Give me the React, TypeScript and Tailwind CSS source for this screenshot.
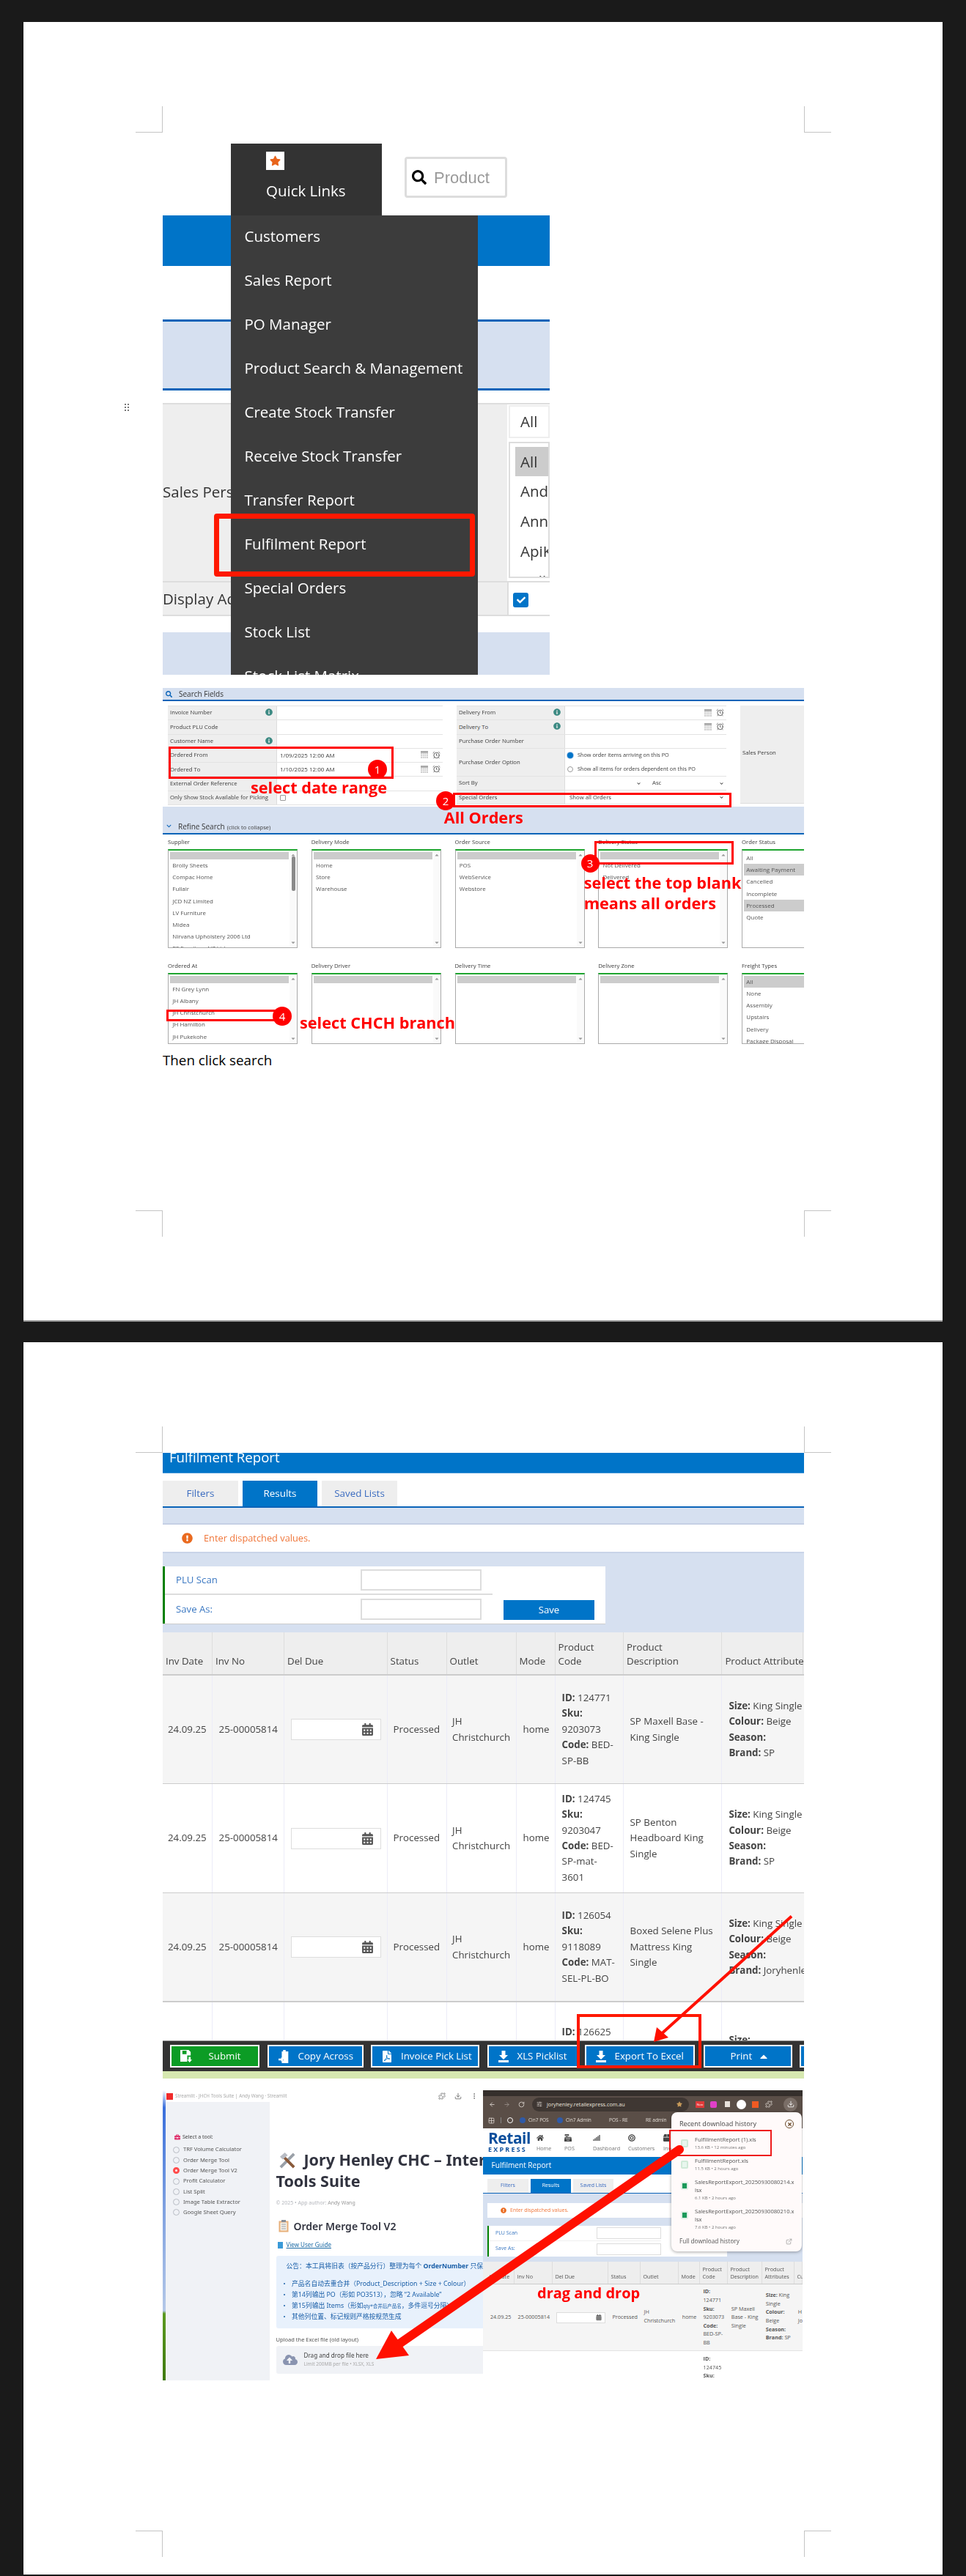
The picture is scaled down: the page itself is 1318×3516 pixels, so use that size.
import type { ReactNode } from 'react';
import { AlarmClock, ExternalLink, Puzzle, RotateCw, ArrowLeft, ArrowRight, Grid2x2, MoreVertical, Download, SlidersHorizontal } from 'lucide-react';
import { FaStar, FaSearch, FaInfoCircle, FaCalendarAlt, FaFilePdf, FaHome, FaCaretUp, FaChevronDown, FaCheck, FaCashRegister, FaSignal, FaBullseye, FaBox, FaExclamationCircle, FaCloudUploadAlt, FaBriefcase, FaTimes } from 'react-icons/fa';

const menuItems = ['Customers', 'Sales Report', 'PO Manager', 'Product Search & Management', 'Create Stock Transfer', 'Receive Stock Transfer', 'Transfer Report', 'Fulfilment Report', 'Special Orders', 'Stock List', 'Stock List Matrix'];

function CropMark({ className }: { className: string }) {
  return <div className={`absolute w-[37px] h-[36px] border-[#c4c4c4] ${className}`} />;
}

function Badge({ n, className }: { n: number; className: string }) {
  return <div className={`absolute flex items-center justify-center rounded-full bg-[#ff0000] text-white text-[15px] ${className}`}>{n}</div>;
}

function Callout({ children, className }: { children: ReactNode; className: string }) {
  return <div className={`absolute whitespace-nowrap font-bold text-[#ff0000] leading-none ${className}`}>{children}</div>;
}

function QuickLinksShot() {
  return (
    <div className="relative w-[528px] h-[725px] overflow-hidden blur-[0.5px]">
      <div className="flex h-[98px]">
        <div className="ml-[93px] w-[206px] bg-[#333333] flex flex-col">
          <div className="ml-[48px] mt-[11px] w-[25px] h-[25px] bg-white flex items-center justify-center">
            <FaStar className="text-[#e8641b] text-[15px]" />
          </div>
          <div className="mt-[15px] ml-[48px] text-[20.5px] leading-[27px] text-white">Quick Links</div>
        </div>
        <div className="ml-[31px] mt-[18px] w-[140px] h-[56px] border-[3px] border-[#dddddd] rounded-[4px] flex items-center pl-[7px]">
          <FaSearch className="text-[20px] text-black" />
          <span className="ml-[10px] text-[22px] text-[#9a9a9a] [font-family:'Liberation_Sans',sans-serif]">Product</span>
        </div>
      </div>
      <div className="h-[69px] bg-[#0074c8]" />
      <div className="h-[73px]" />
      <div className="h-[97px] bg-[#d6e0f0] border-y-[3px] border-[#0a63b8]" />
      <div className="h-[17px]" />
      <div className="flex h-[243px] border-t-2 border-[#dddddd] bg-[#eeeeee]">
        <div className="w-[470px] flex items-center pb-[2px] text-[20.5px] text-[#333333] whitespace-nowrap overflow-hidden">Sales Person</div>
        <div className="flex-1 bg-white pl-[2px] pt-[1px] overflow-hidden">
          <div className="h-[45px] border-2 border-[#eeeeee] flex items-center pl-[14px] text-[20.5px] text-[#333333]">All</div>
          <div className="mt-[5px] h-[186px] border-2 border-[#dddddd] pl-[7px] pt-[5px] text-[20.5px] leading-[41px] text-[#333333] overflow-hidden">
            <div className="h-[40px] bg-[#cccccc] pl-[7px]">All</div>
            <div className="pl-[7px] whitespace-nowrap">Andy</div>
            <div className="pl-[7px] whitespace-nowrap">Annie</div>
            <div className="pl-[7px] whitespace-nowrap">ApiKey</div>
            <div className="pl-[7px] whitespace-nowrap">Belle</div>
          </div>
        </div>
      </div>
      <div className="flex h-[48px] border-y-2 border-[#dddddd] bg-[#eeeeee]">
        <div className="w-[470px] flex items-center text-[20.5px] text-[#333333] whitespace-nowrap overflow-hidden">Display Address</div>
        <div className="flex-1 bg-white border-l-2 border-[#dddddd] pl-[6px] pt-[14px]">
          <div className="w-[21px] h-[20px] rounded-[3px] bg-[#0074c8] flex items-center justify-center">
            <FaCheck className="text-white text-[12px]" />
          </div>
        </div>
      </div>
      <div className="h-[22px]" />
      <div className="h-[58px] bg-[#d6e0f0]" />

      <div className="absolute left-[93px] top-[98px] w-[337px] h-[627px] bg-[#3c3c3c] pl-[18.5px] overflow-hidden">
        {menuItems.map((item) => (
          <div key={item} className="h-[60px] pt-[1px] flex items-center text-[20.5px] text-white whitespace-nowrap first:-mt-[2px]">{item}</div>
        ))}
      </div>
      <div className="absolute left-[70px] top-[505px] w-[356px] h-[86px] border-[7px] border-[#ff1800] rounded-[4px]" />
    </div>
  );
}

function FieldRow({ label, children, info, h = 'h-[19.3px]', cell = 'w-[149px]' }: { label: string; children?: ReactNode; info?: boolean; h?: string; cell?: string }) {
  return (
    <div className={`flex border-b border-[#e3e3e3] ${h}`}>
      <div className={`${cell} shrink-0 bg-[#eeeeee] flex items-center justify-between pl-[3px] pr-[5px] border-r border-[#dddddd] whitespace-nowrap`}>
        <span>{label}</span>
        {info && <FaInfoCircle className="text-[#3c8a83] text-[10px] -mt-[2px]" />}
      </div>
      <div className="flex-1 flex items-center relative">{children}</div>
    </div>
  );
}

function DateIcons() {
  return (
    <div className="absolute right-[3px] top-[3px] flex items-center gap-[6px]">
      <svg viewBox="0 0 10 10" className="w-[10px] h-[10px]">
        <rect width="10" height="10" fill="#cfcfcf" />
        <rect y="0" width="10" height="2.5" fill="#a8a8a8" />
        <path d="M2.5 3v7M5 3v7M7.5 3v7M0 5h10M0 7.5h10" stroke="#ffffff" strokeWidth="0.6" />
      </svg>
      <AlarmClock className="w-[11px] h-[11px] text-[#555555]" />
    </div>
  );
}

function PickList({ label, items, blank = true, selected = [], scroll = true, thumb = false, h }: { label: string; items: string[]; blank?: boolean; selected?: string[]; scroll?: boolean; thumb?: boolean; h: string }) {
  return (
    <div className="w-[177px] shrink-0">
      <div className="h-[18px] flex items-center whitespace-nowrap text-[7.75px]">{label}</div>
      <div className={`relative overflow-hidden border-t-2 border-[#1ea52f] border-x border-x-[#aaaaaa] border-b border-b-[#aaaaaa] pt-[2px] px-[2px] ${h}`}>
        {blank && <div className="h-[10px] w-[162px] bg-[#cccccc]" />}
        {items.map((item) => (
          <div key={item} className={`h-[16.2px] flex items-center pl-[3.3px] whitespace-nowrap text-[8px] text-[#555555] ${selected.includes(item) ? 'bg-[#cccccc]' : ''}`}>{item}</div>
        ))}
        {scroll && (
          <div className="absolute right-0 top-0 bottom-0 w-[10px] bg-[#fafafa] flex flex-col items-center justify-between py-[2px] text-[#999999]">
            <FaCaretUp className="text-[8px]" />
            <FaCaretUp className="text-[8px] rotate-180" />
          </div>
        )}
        {thumb && <div className="absolute right-[2px] top-[8px] w-[5px] h-[47px] rounded-[2px] bg-[#8a8a8a]" />}
      </div>
    </div>
  );
}

function SearchFieldsShot() {
  return (
    <div className="relative w-[875px] h-[489px] overflow-hidden text-[7.75px] text-[#3d3d3d] blur-[0.45px]">
      <div className="h-[18px] bg-[#d6e0f0] border-b-2 border-[#0a63b8] flex items-center">
        <FaSearch className="ml-[4px] text-[#0a63b8] text-[9px]" />
        <span className="ml-[9px] text-[10px] text-[#333333]">Search Fields</span>
      </div>
      <div className="flex mt-[6px] h-[136px]">
        <div className="ml-[7px] w-[375px] border-t border-[#e3e3e3]">
          <FieldRow label="Invoice Number" info />
          <FieldRow label="Product PLU Code" />
          <FieldRow label="Customer Name" info />
          <FieldRow label="Ordered From"><span className="pl-[4px] text-[8px]">1/09/2025 12:00 AM</span><DateIcons /></FieldRow>
          <FieldRow label="Ordered To"><span className="pl-[4px] text-[8px]">1/10/2025 12:00 AM</span><DateIcons /></FieldRow>
          <FieldRow label="External Order Reference" />
          <FieldRow label="Only Show Stock Available for Picking"><div className="ml-[4px] w-[8px] h-[8px] border border-[#999999] rounded-[1px]" /></FieldRow>
        </div>
        <div className="ml-[19px] w-[368px] border-t border-[#e3e3e3]">
          <FieldRow label="Delivery From" info cell="w-[148px]"><DateIcons /></FieldRow>
          <FieldRow label="Delivery To" info cell="w-[148px]"><DateIcons /></FieldRow>
          <FieldRow label="Purchase Order Number" cell="w-[148px]" />
          <FieldRow label="Purchase Order Option" h="h-[38px]" cell="w-[148px]">
            <div className="pl-[3px] flex flex-col gap-[8px] text-[7.3px]">
              <div className="flex items-center gap-[6px]"><span className="w-[8px] h-[8px] rounded-full bg-[#0074c8] ring-1 ring-[#a8c8ea]" />Show order items arriving on this PO</div>
              <div className="flex items-center gap-[6px]"><span className="w-[8px] h-[8px] rounded-full border border-[#999999]" />Show all items for orders dependent on this PO</div>
            </div>
          </FieldRow>
          <FieldRow label="Sort By" cell="w-[148px]">
            <div className="flex w-full">
              <div className="w-[105px] ml-[1px] flex justify-end items-center pr-[3px]"><FaChevronDown className="text-[5px] text-[#333333]" /></div>
              <div className="ml-[8px] w-[104px] pl-[5px] flex justify-between items-center pr-[2px]">Asc<FaChevronDown className="text-[5px] text-[#333333]" /></div>
            </div>
          </FieldRow>
          <FieldRow label="Special Orders" cell="w-[148px]">
            <div className="flex w-full pl-[6px] pr-[4px] justify-between items-center">Show all Orders<FaChevronDown className="text-[5px] text-[#333333]" /></div>
          </FieldRow>
        </div>
        <div className="ml-[19px] w-[87px] h-[134px] bg-[#eeeeee] border-b border-[#dddddd] flex items-center pl-[3px] pb-[4px]">Sales Person</div>
      </div>
      <div className="mt-[2px] h-[38px] bg-[#d6e0f0] border-b-2 border-[#0a63b8] flex items-end pb-[1px]">
        <FaChevronDown className="ml-[5px] mb-[5px] text-[#0a63b8] text-[7px]" />
        <span className="ml-[9px] text-[10px] text-[#333333]">Refine Search</span>
        <span className="ml-[3px] text-[7.6px] mb-[1px]">(click to collapse)</span>
      </div>
      <div className="flex gap-[18.75px] pl-[7px] mt-[2px]">
        <PickList h="h-[135px]" label="Supplier" thumb items={['Brolly Sheets', 'Compac Home', 'Fullair', 'JCD NZ Limited', 'LV Furniture', 'Midea', 'Nirvana Upholstery 2006 Ltd', 'PF Furniture NZ Ltd']} />
        <PickList h="h-[135px]" label="Delivery Mode" items={['Home', 'Store', 'Warehouse']} />
        <PickList h="h-[135px]" label="Order Source" items={['POS', 'WebService', 'Webstore']} />
        <PickList h="h-[135px]" label="Delivery Status" items={['Not Delivered', 'Delivered']} />
        <PickList h="h-[135px]" label="Order Status" blank={false} scroll={false} selected={['Awaiting Payment', 'Processed']} items={['All', 'Awaiting Payment', 'Cancelled', 'Incomplete', 'Processed', 'Quote']} />
      </div>
      <div className="flex gap-[18.75px] pl-[7px] mt-[15.7px]">
        <PickList h="h-[97px]" label="Ordered At" items={['FN Grey Lynn', 'JH Albany', 'JH Christchurch', 'JH Hamilton', 'JH Pukekohe', 'JH Queenstown']} />
        <PickList h="h-[97px]" label="Delivery Driver" items={[]} />
        <PickList h="h-[97px]" label="Delivery Time" items={[]} />
        <PickList h="h-[97px]" label="Delivery Zone" items={[]} />
        <PickList h="h-[97px]" label="Freight Types" blank={false} scroll={false} selected={['All']} items={['All', 'None', 'Assembly', 'Upstairs', 'Delivery', 'Package Disposal']} />
      </div>

      <div className="absolute left-[8px] top-[80px] w-[307px] h-[44px] border-[3px] border-[#ff0000]" />
      <Badge n={1} className="left-[280px] top-[98px] w-[26px] h-[26px]" />
      <Callout className="left-[120px] top-[125px] text-[21.7px]">select date range</Callout>
      <div className="absolute left-[396px] top-[142.7px] w-[380px] h-[20.3px] border-[3px] border-[#ff0000]" />
      <Badge n={2} className="left-[373px] top-[141px] w-[26px] h-[26px]" />
      <Callout className="left-[383.7px] top-[166px] text-[21.7px]">All Orders</Callout>
      <div className="absolute left-[588.7px] top-[208.7px] w-[190px] h-[32px] border-[3px] border-[#ff0000]" />
      <Badge n={3} className="left-[570.5px] top-[226.5px] w-[25px] h-[25px]" />
      <Callout className="left-[574.7px] top-[255px] text-[21.7px]">select the top blank</Callout>
      <Callout className="left-[574.7px] top-[283px] text-[21.7px]">means all orders</Callout>
      <div className="absolute left-[5px] top-[438.7px] w-[155px] h-[16.3px] border-[3px] border-[#ff0000]" />
      <Badge n={4} className="left-[150px] top-[435px] w-[26px] h-[26px]" />
      <Callout className="left-[187px] top-[446px] text-[21.7px]">select CHCH branch</Callout>
    </div>
  );
}

const rows = [
  { id: ['124771', '9203073', 'BED-', 'SP-BB'], desc: ['SP Maxell Base -', 'King Single'], brand: 'SP', h: 'h-[148px]', bg: 'bg-[#f5f5f5]' },
  { id: ['124745', '9203047', 'BED-', 'SP-mat-', '3601'], desc: ['SP Benton', 'Headboard King', 'Single'], brand: 'SP', h: 'h-[149px]', bg: 'bg-white' },
  { id: ['126054', '9118089', 'MAT-', 'SEL-PL-BO'], desc: ['Boxed Selene Plus', 'Mattress King', 'Single'], brand: 'Joryhenley', h: 'h-[148px]', bg: 'bg-[#f5f5f5]' },
];

const colDivider = 'border-r border-[#ececf8]';

function BoldLine({ k, v }: { k: string; v?: string }) {
  return <div className="whitespace-nowrap"><b>{k}</b>{v ? ` ${v}` : ''}</div>;
}

function DownloadGlyph() {
  return (
    <svg viewBox="0 0 16 16" className="w-[16px] h-[16px] fill-white shrink-0">
      <path d="M5.5 0h5v6h3.5L8 12 2 6h3.5zM1 13h14v3H1z" />
    </svg>
  );
}

function BarButton({ label, icon, trail, green, className }: { label: string; icon?: ReactNode; trail?: ReactNode; green?: boolean; className: string }) {
  return (
    <div className={`h-[31.5px] border-2 border-white flex items-center text-white text-[13.3px] whitespace-nowrap shrink-0 ${green ? 'bg-[#0c9c25]' : 'bg-[#0074c8]'} ${className}`}>
      {icon}
      <span>{label}</span>
      {trail}
    </div>
  );
}

function ResultsShot() {
  return (
    <div className="relative w-[875px] h-[854px] overflow-hidden blur-[0.45px] text-[13.3px] text-[#444444]">
      <div className="h-[28px] bg-[#0074c8] border-b border-[#4a9ad8] overflow-hidden pl-[9px]">
        <div className="-mt-[7px] text-[18.6px] leading-[25px] text-white">Fulfilment Report</div>
      </div>
      <div className="flex gap-[6px] mt-[10px] h-[35px] text-[13.4px] text-[#3b6cc0]">
        <div className="w-[103px] bg-[#eeeeee] flex items-center justify-center">Filters</div>
        <div className="w-[102px] bg-[#0074c8] text-white flex items-center justify-center">Results</div>
        <div className="w-[103px] bg-[#eeeeee] flex items-center justify-center">Saved Lists</div>
      </div>
      <div className="h-[25px] bg-[#d6e0f0] border-t-2 border-[#0a63b8] border-b-2 border-b-[#c5d0e5]" />
      <div className="h-[37px] flex items-center pl-[26px] text-[12.8px] text-[#f0763a]">
        <FaExclamationCircle className="text-[15px] text-[#ea6a1f]" />
        <span className="ml-[15px]">Enter dispatched values.</span>
      </div>
      <div className="h-[110px] bg-[#d6e0f0] border-t-2 border-[#c9d4e8] pt-[18px]">
        <div className="w-[604px] h-[79px] bg-white border-b border-[#cccccc] flex text-[13.2px] text-[#3b78c2]">
          <div className="w-[450px] border-l-[3px] border-[#008000]">
            <div className="h-[39px] border-b-2 border-[#dddddd] flex items-center justify-between pl-[15px] pr-[15px]">
              <span>PLU Scan</span>
              <div className="w-[165px] h-[29px] border-2 border-[#dddddd]" />
            </div>
            <div className="h-[39px] flex items-center justify-between pl-[15px] pr-[15px]">
              <span>Save As:</span>
              <div className="w-[165px] h-[29px] border-2 border-[#dddddd]" />
            </div>
          </div>
          <div className="ml-[15px] mt-[46px] w-[124px] h-[27px] bg-[#0074c8] text-white flex items-center justify-center">Save</div>
        </div>
      </div>
      <div className="grid grid-cols-[68px_98px_140.6px_81px_95px_53px_93.4px_134.4px_111px] h-[59px] bg-[#eeeeee] border-b-2 border-[#cccccc] whitespace-nowrap">
        {['Inv Date', 'Inv No', 'Del Due', 'Status', 'Outlet', 'Mode', 'Product|Code', 'Product|Description', 'Product Attributes'].map((h) => (
          <div key={h} className="border-r border-[#dddddd] flex flex-col justify-end pb-[9px] pl-[4px] leading-[18.5px]">
            {h.split('|').map((p) => <div key={p}>{p}</div>)}
          </div>
        ))}
      </div>
      {rows.map((r) => (
        <div key={r.id[0]} className={`grid grid-cols-[68px_98px_140.6px_81px_95px_53px_93.4px_134.4px_111px] ${r.h} ${r.bg} border-b border-[#cccccc] leading-[21.4px]`}>
          <div className={`flex items-center pl-[7px] ${colDivider}`}>24.09.25</div>
          <div className={`flex items-center pl-[8.6px] ${colDivider}`}>25-00005814</div>
          <div className={`flex items-center pl-[8.6px] ${colDivider}`}>
            <div className="w-[123.5px] h-[29px] bg-white border border-[#dddddd] flex items-center justify-end pr-[9px]">
              <FaCalendarAlt className="text-[17px] text-[#555555]" />
            </div>
          </div>
          <div className={`flex items-center pl-[8px] ${colDivider}`}>Processed</div>
          <div className={`flex flex-col justify-center pl-[7.5px] ${colDivider}`}><div>JH</div><div>Christchurch</div></div>
          <div className={`flex items-center pl-[9px] ${colDivider}`}>home</div>
          <div className={`flex flex-col justify-center pl-[9px] whitespace-nowrap ${colDivider}`}>
            <BoldLine k="ID:" v={r.id[0]} />
            <BoldLine k="Sku:" />
            <div>{r.id[1]}</div>
            <BoldLine k="Code:" v={r.id[2]} />
            {r.id.slice(3).map((p) => <div key={p}>{p}</div>)}
          </div>
          <div className={`flex flex-col justify-center pl-[8.6px] whitespace-nowrap ${colDivider}`}>
            {r.desc.map((p) => <div key={p}>{p}</div>)}
          </div>
          <div className="flex flex-col justify-center pl-[9px] whitespace-nowrap">
            <BoldLine k="Size:" v="King Single" />
            <BoldLine k="Colour:" v="Beige" />
            <BoldLine k="Season:" />
            <BoldLine k="Brand:" v={r.brand} />
          </div>
        </div>
      ))}
      <div className="grid grid-cols-[68px_98px_140.6px_81px_95px_53px_93.4px_134.4px_111px] h-[53px] border-t border-[#cccccc] leading-[21.4px] overflow-hidden">
        <div className={colDivider} /><div className={colDivider} /><div className={colDivider} /><div className={colDivider} /><div className={colDivider} /><div className={colDivider} />
        <div className={`pl-[9px] pt-[30px] whitespace-nowrap ${colDivider}`}><BoldLine k="ID:" v="126625" /></div>
        <div className={colDivider} />
        <div className="pl-[9px] pt-[41px]"><b>Size:</b></div>
      </div>
      <div className="h-[42px] bg-[#333333] border-t border-[#999999] flex items-center gap-[10.5px] pl-[9.5px] overflow-hidden">
        <BarButton green label="Submit" className="w-[122.5px] pl-[12px] gap-[22px]" icon={
          <svg viewBox="0 0 18 18" className="w-[17px] h-[17px] fill-white shrink-0"><path d="M0 0h12l3 3v5h-5v9H0zM3 1v5h6V1zM12 10h3v4h2l-3.5 4L10 14h2z" /></svg>
        } />
        <BarButton label="Copy Across" className="w-[131px] pl-[13px] gap-[11px]" icon={
          <svg viewBox="0 0 18 20" className="w-[16px] h-[18px] fill-white shrink-0"><path d="M7 0h4v2h4v18H5v-4h3v-2l-3 0V2h2zM0 13h4v-2l4 3.5L4 18v-2H0z" /></svg>
        } />
        <BarButton label="Invoice Pick List" className="w-[148px] pl-[12px] gap-[11px]" icon={<FaFilePdf className="text-[16px] shrink-0" />} />
        <BarButton label="XLS Picklist" className="w-[124px] pl-[12px] gap-[11px]" icon={<DownloadGlyph />} />
        <BarButton label="Export To Excel" className="w-[150px] pl-[12px] gap-[11px] -ml-[1.5px]" icon={<DownloadGlyph />} />
        <BarButton label="Print" className="w-[121px] pl-[35px] gap-[8px] ml-[1.5px]" trail={<FaCaretUp className="text-[16px]" />} />
        <div className="w-[20px] h-[31.5px] shrink-0 bg-[#0074c8] border-2 border-white" />
      </div>
      <div className="h-[10px] bg-[#d6e8b0]" />

      <div className="absolute left-[565px] top-[765.5px] w-[170px] h-[74.5px] border-[4px] border-[#ff1800]" />
      <svg className="absolute inset-0 w-full h-full" viewBox="0 0 875 854">
        <path d="M858 632.5L676 797" stroke="#ff1000" strokeWidth="4" fill="none" />
        <path d="M670 804l4-20 16 14z" fill="#ff1000" />
      </svg>
    </div>
  );
}

function ToolRadio({ label, on }: { label: string; on?: boolean }) {
  return (
    <div className="h-[14.3px] flex items-center gap-[5px] whitespace-nowrap">
      {on ? <span className="w-[9px] h-[9px] rounded-full border-[3px] border-[#ff4b4b] bg-white" /> : <span className="w-[9px] h-[9px] rounded-full border border-[#b8bcc4]" />}
      <span>{label}</span>
    </div>
  );
}

function StreamlitWindow() {
  return (
    <div className="w-[437px] h-[396px] flex overflow-hidden [font-family:'Noto_Sans','Noto_Sans_CJK_SC',sans-serif] text-[#31333f]">
      <div className="w-[3.5px] bg-[linear-gradient(180deg,#ffffff_0%,#3a6fdc_6%,#7ea0e0_40%,#b4c8e8_76%,#5c9a20_77%,#3f7a10_100%)]" />
      <div className="flex-1 min-w-0 flex flex-col">
        <div className="h-[16px] flex items-center pl-[1.5px] pr-[7px] text-[6.3px] text-[#aaaaaa] whitespace-nowrap">
          <div className="w-[9px] h-[9px] bg-[#f02b2b] mr-[3px]" />
          <span className="flex-1">Streamlit - JHCH Tools Suite | Andy Wang · Streamlit</span>
          <Puzzle className="w-[10px] h-[10px] text-[#666666]" />
          <Download className="w-[10px] h-[10px] text-[#666666] ml-[12px]" />
          <MoreVertical className="w-[10px] h-[10px] text-[#666666] ml-[12px]" />
        </div>
        <div className="flex-1 flex min-h-0">
          <div className="w-[142px] bg-[#f0f2f6] shrink-0 pl-[10.5px] pt-[41px] text-[7.6px] text-[#555555]">
            <div className="flex items-center h-[14px] pl-[2px] text-[7px] text-[#444444]">
              <FaBriefcase className="text-[#e0356f] text-[8px]" />
              <span className="ml-[3px]">Select a tool:</span>
            </div>
            <div className="mt-[3px]">
              <ToolRadio label="TRF Volume Calculator" />
              <ToolRadio label="Order Merge Tool" />
              <ToolRadio label="Order Merge Tool V2" on />
              <ToolRadio label="Profit Calculator" />
              <ToolRadio label="List Split" />
              <ToolRadio label="Image Table Extractor" />
              <ToolRadio label="Google Sheet Query" />
            </div>
          </div>
          <div className="flex-1 min-w-0 pl-[9px] overflow-hidden">
            <div className="mt-[64px] flex items-center h-[30px] whitespace-nowrap">
              <svg viewBox="0 0 26 26" className="w-[25px] h-[25px] ml-[3px] shrink-0">
                <path d="M3 23L22 4" stroke="#9aa0a8" strokeWidth="4" />
                <path d="M22 23L7 8" stroke="#8a5a3a" strokeWidth="4" />
                <path d="M2 8l7-6 4 4-7 6z" fill="#b8bcc4" />
              </svg>
              <span className="ml-[10px] text-[21.5px] font-bold leading-none">Jory Henley CHC – Internal</span>
            </div>
            <div className="h-[29px] flex items-center text-[21.5px] font-bold whitespace-nowrap">Tools Suite</div>
            <div className="mt-[10px] text-[7px] leading-[10px] text-[#b5b7bd]">© 2025 • App author: <span className="text-[#999999]">Andy Wang</span></div>
            <div className="mt-[17px] flex items-center h-[18px]">
              <svg viewBox="0 0 14 17" className="w-[14px] h-[17px] ml-[3px] shrink-0"><rect x="0.5" y="1.5" width="13" height="15" fill="#e8b07a" /><rect x="2.5" y="3.5" width="9" height="11" fill="#f4f0e8" /><rect x="4" y="0" width="6" height="3" fill="#8a8f98" /><path d="M4 6h6M4 9h6M4 12h6" stroke="#9aa0a8" /></svg>
              <span className="ml-[7px] text-[14px] font-semibold whitespace-nowrap">Order Merge Tool V2</span>
            </div>
            <div className="mt-[12px] flex items-center h-[10px]">
              <div className="w-[7px] h-[9px] ml-[2px] bg-[#3a9ad8]" />
              <span className="ml-[5px] text-[8px] underline text-[#1b6aa5]">View User Guide</span>
            </div>
            <div className="mt-[10px] h-[99px] w-[300px] bg-[#e8f1fc] rounded-[3px] pl-[10px] pt-[10px] text-[8.8px] text-[#1a5fa8] whitespace-nowrap">
              <div className="flex items-center h-[10px]">
                <div className="w-[9px] h-[7px] bg-[#e0506a] mr-[4px]" />
                <span>公告：本工具将旧表（按产品分行）整理为每个 <b>OrderNumber</b> 只保留一行</span>
              </div>
              <ul className="mt-[10.5px] leading-[15px]">
                <li className="flex items-center"><span className="w-[2.5px] h-[2.5px] rounded-full bg-[#1a5fa8] mr-[9px]" />产品名自动去重合并（Product_Description + Size + Colour）</li>
                <li className="flex items-center"><span className="w-[2.5px] h-[2.5px] rounded-full bg-[#1a5fa8] mr-[9px]" />第14列输出 PO（形如 PO3513），忽略 “2 Available”</li>
                <li className="flex items-center"><span className="w-[2.5px] h-[2.5px] rounded-full bg-[#1a5fa8] mr-[9px]" />第15列输出 Items（形如 <span className="text-[6.5px]">qty*合并后产品名</span>，多件逗号分隔）</li>
                <li className="flex items-center"><span className="w-[2.5px] h-[2.5px] rounded-full bg-[#1a5fa8] mr-[9px]" />其他列位置、标记规则严格按规范生成</li>
              </ul>
            </div>
            <div className="mt-[10px] text-[7.5px] leading-[10px] text-[#555555]">Upload the Excel file (old layout)</div>
            <div className="mt-[4px] h-[38px] w-[300px] bg-[#f0f2f6] rounded-[3px] flex items-center pl-[9px]">
              <FaCloudUploadAlt className="text-[20px] text-[#8a94b0]" />
              <div className="ml-[9px]">
                <div className="text-[8.1px] leading-[12px] text-[#444444] whitespace-nowrap">Drag and drop file here</div>
                <div className="text-[6.5px] leading-[12px] text-[#aaaaaa] whitespace-nowrap">Limit 200MB per file • XLSX, XLS</div>
              </div>
            </div>
          </div>
        </div>
      </div>
    </div>
  );
}

function DownloadItem({ name, sub, solid, tail }: { name: string; sub: string; solid?: boolean; tail?: string }) {
  return (
    <div className="flex pl-[13px]">
      <div className={`mt-[5px] w-[10px] h-[11px] rounded-[2px] border-2 shrink-0 ${solid ? 'bg-[#1a9a5a] border-[#dff0e6]' : 'bg-[#e8f6ee] border-[#d0ead8]'}`} />
      <div className="ml-[9px] text-[7.6px] text-[#555555]">
        <div className="leading-[11px] whitespace-nowrap">{name}</div>
        {tail && <div className="leading-[11px]">{tail}</div>}
        <div className="leading-[10px] text-[6px] text-[#777777] whitespace-nowrap">{sub}</div>
      </div>
    </div>
  );
}

const miniCols = 'grid-cols-[38px_52px_76px_44px_52px_29px_38px_47px_44px_11px]';

function RetailWindow() {
  return (
    <div className="relative w-[436px] h-[396px] overflow-hidden bg-white text-[7.2px] text-[#555555]">
      <div className="h-[8px] bg-[#352f2c]" />
      <div className="h-[22px] bg-[#5a4e47] flex items-center text-[#e8e2dc]">
        <ArrowLeft className="ml-[8px] w-[9px] h-[9px]" />
        <ArrowRight className="ml-[11px] w-[9px] h-[9px] opacity-50" />
        <RotateCw className="ml-[11px] w-[9px] h-[9px]" />
        <div className="ml-[10px] w-[214px] h-[19px] rounded-full bg-[#3f3733] flex items-center pl-[6px] text-[7.2px] relative">
          <SlidersHorizontal className="w-[8px] h-[8px]" />
          <span className="ml-[6px]">joryhenley.retailexpress.com.au</span>
          <FaStar className="absolute right-[9px] text-[#c79a5a] text-[8px]" />
        </div>
        <div className="ml-[9px] w-[12px] h-[9px] bg-[#e03a3a] text-[4px] text-white text-center leading-[9px]">New</div>
        <div className="ml-[8px] w-[9px] h-[9px] rounded-[2px] bg-[#e040c8]" />
        <div className="ml-[11px] w-[7px] h-[8px] bg-[#e8e2dc]" />
        <div className="ml-[9px] w-[13px] h-[13px] rounded-full bg-white" />
        <div className="ml-[8px] w-[9px] h-[9px] bg-[#f05a22]" />
        <Puzzle className="ml-[9px] w-[10px] h-[10px]" />
        <div className="ml-[15px] w-[19px] h-[19px] rounded-full bg-[#7a6e67] flex items-center justify-center">
          <Download className="w-[10px] h-[10px] text-white" />
        </div>
      </div>
      <div className="h-[22px] bg-[#5a4e47] flex items-center text-[6.5px] text-[#e0dad4] whitespace-nowrap">
        <Grid2x2 className="ml-[7px] w-[9px] h-[9px]" />
        <div className="ml-[8px] w-[1px] h-[8px] bg-[#888888]" />
        <div className="ml-[8px] w-[8px] h-[8px] rounded-full border border-white" />
        <div className="ml-[9px] w-[8px] h-[8px] rounded-full bg-[#2f5aa8]" />
        <span className="ml-[4px] w-[30px]">Cin7 POS</span>
        <div className="ml-[9px] w-[8px] h-[8px] rounded-full bg-[#2f5aa8]" />
        <span className="ml-[4px] w-[37px]">Cin7 Admin</span>
        <span className="ml-[22px] w-[29px]">POS - RE</span>
        <span className="ml-[21px]">RE admin</span>
      </div>
      <div className="h-[39px] flex items-start">
        <div className="ml-[7px] mt-[3px] w-[56px] text-[#0d4f9c]">
          <div className="text-[21px] font-bold leading-[21px] tracking-[-0.5px]">Retail</div>
          <div className="text-[9px] font-bold leading-[9px] tracking-[2.2px]">EXPRESS</div>
        </div>
        <div className="ml-[10px] mt-[8px] flex text-[7.2px] text-[#777777]">
          <div className="w-[38px]"><FaHome className="text-[10px] text-[#444444]" /><div className="mt-[4px]">Home</div></div>
          <div className="w-[39px]"><FaCashRegister className="text-[10px] text-[#444444]" /><div className="mt-[4px]">POS</div></div>
          <div className="w-[48px]"><FaSignal className="text-[10px] text-[#444444]" /><div className="mt-[4px]">Dashboard</div></div>
          <div className="w-[48px]"><FaBullseye className="text-[10px] text-[#444444]" /><div className="mt-[4px]">Customers</div></div>
          <div><FaBox className="text-[10px] text-[#444444]" /><div className="mt-[4px]">Inventory</div></div>
        </div>
      </div>
      <div className="h-[24px] bg-[#0074c8] flex items-center pl-[11.5px] text-[10.1px] text-white">Fulfilment Report</div>
      <div className="flex gap-[3px] pl-[6px] mt-[6px] h-[20px] text-[7px] text-[#3b6cc0] border-b border-[#0a63b8]">
        <div className="w-[56px] bg-[#eeeeee] flex items-center justify-center">Filters</div>
        <div className="w-[55px] bg-[#0074c8] text-white flex items-center justify-center">Results</div>
        <div className="w-[55px] bg-[#eeeeee] flex items-center justify-center">Saved Lists</div>
      </div>
      <div className="h-[93px] bg-[#d6e0f0] pl-[6px] pt-[13px]">
        <div className="h-[20px] bg-white flex items-center pl-[18px] text-[7px] text-[#f0763a]">
          <FaExclamationCircle className="text-[8px] text-[#ea6a1f]" />
          <span className="ml-[5px]">Enter dispatched values.</span>
        </div>
        <div className="mt-[11px] w-[327px] h-[42px] bg-white border-l-2 border-[#008000] text-[7px] text-[#3b78c2]">
          <div className="h-[21px] flex items-center justify-between pl-[9px] w-[235px] border-b border-[#eeeeee]">
            <span>PLU Scan</span>
            <div className="w-[88px] h-[16px] border border-[#dddddd]" />
          </div>
          <div className="h-[21px] flex items-center justify-between pl-[9px] w-[235px]">
            <span>Save As:</span>
            <div className="w-[88px] h-[16px] border border-[#dddddd]" />
          </div>
        </div>
      </div>
      <div className={`grid ${miniCols} pl-[5px] h-[31px] bg-[#eeeeee] border-b border-[#cccccc] whitespace-nowrap leading-[10px]`}>
        {['Inv Date', 'Inv No', 'Del Due', 'Status', 'Outlet', 'Mode', 'Product|Code', 'Product|Description', 'Product|Attributes', 'Cu'].map((h) => (
          <div key={h} className="flex flex-col justify-end pb-[5px] pl-[3.5px] border-r border-[#dddddd]">
            {h.split('|').map((p) => <div key={p}>{p}</div>)}
          </div>
        ))}
      </div>
      <div className="h-[91px] bg-[#f5f5f5] border-b border-[#e3e3e3] pl-[5px] flex relative whitespace-nowrap leading-[11.6px]">
        <div className="w-[38px] flex items-center pl-[5px]">24.09.25</div>
        <div className="w-[52px] flex items-center pl-[4.6px]">25-00005814</div>
        <div className="w-[76px] flex items-center pl-[5px]"><div className="w-[67px] h-[15px] bg-white border border-[#dddddd] flex justify-end items-center pr-[4px]"><FaCalendarAlt className="text-[8px]" /></div></div>
        <div className="w-[44px] flex items-center pl-[5.6px]">Processed</div>
        <div className="w-[52px] flex flex-col justify-center pl-[4.6px] pb-[2px]"><div>JH</div><div>Christchurch</div></div>
        <div className="w-[29px] flex items-center pl-[5px]">home</div>
        <div className="w-[38px] flex flex-col justify-center pl-[4.6px]"><b>ID:</b><div>124771</div><b>Sku:</b><div>9203073</div><b>Code:</b><div>BED-SP-</div><div>BB</div></div>
        <div className="w-[47px] flex flex-col justify-center pl-[5px]"><div>SP Maxell</div><div>Base - King</div><div>Single</div></div>
        <div className="w-[44px] flex flex-col justify-center pl-[5px] pb-[2px]"><div><b>Size:</b> King</div><div>Single</div><b>Colour:</b><div>Beige</div><b>Season:</b><div><b>Brand:</b> SP</div></div>
        <div className="flex flex-col justify-center pl-[5px] pb-[2px]"><div>H</div><div>Jo</div></div>
      </div>
      <div className="pl-[300.6px] pt-[5px] leading-[11.6px]"><b>ID:</b><div>124745</div><b>Sku:</b></div>

      <div className="absolute left-[257px] top-[30px] w-[178px] h-[190px] bg-[#fffafa] rounded-[8px] shadow-[0_1px_4px_rgba(0,0,0,0.35)]">
        <div className="flex items-center justify-between pl-[11px] pr-[11px] pt-[8px] h-[24px] text-[9.1px] text-[#444444] whitespace-nowrap">
          Recent download history
          <div className="w-[12px] h-[12px] rounded-full border border-[#6b4a2a] flex items-center justify-center"><FaTimes className="text-[7px] text-[#6b4a2a]" /></div>
        </div>
        <div className="mt-[8px]">
          <DownloadItem name="FulfillmentReport (1).xls" sub="13.6 KB • 12 minutes ago" />
        </div>
        <div className="mt-[7.5px]">
          <DownloadItem name="FulfillmentReport.xls" sub="11.5 KB • 2 hours ago" />
        </div>
        <div className="mt-[8.5px]">
          <DownloadItem solid name="SalesReportExport_20250930080214.x" tail="lsx" sub="6.1 KB • 2 hours ago" />
        </div>
        <div className="mt-[8px]">
          <DownloadItem solid name="SalesReportExport_20250930080210.x" tail="lsx" sub="7.6 KB • 2 hours ago" />
        </div>
        <div className="mt-[8px] pl-[11px] pr-[13px] flex items-center justify-between text-[8.2px]">Full download history<ExternalLink className="w-[9px] h-[9px] text-[#999999]" /></div>
      </div>
      <div className="absolute left-[254px] top-[54px] w-[140px] h-[36px] border-[2.5px] border-[#ee1c1c]" />
    </div>
  );
}

function DragDropShot() {
  return (
    <div className="relative w-[873px] h-[396px] flex overflow-hidden blur-[0.6px]">
      <StreamlitWindow />
      <RetailWindow />
      <svg className="absolute inset-0 w-full h-full" viewBox="0 0 873 396">
        <path d="M705 81L320 348" stroke="#ff1000" strokeWidth="12" strokeLinecap="round" fill="none" />
        <path d="M291 367L312 328L336 362z" fill="#ff1000" />
      </svg>
      <Callout className="left-[511px] top-[267px] text-[20px] [font-family:'Open_Sans',sans-serif]">drag and drop</Callout>
    </div>
  );
}

export default function App() {
  return (
    <div className="w-[1318px] h-[3516px] overflow-hidden bg-[#1a1a1a] px-[32px] pt-[30px] [font-family:'Open_Sans',sans-serif]">
      <div className="relative h-[1774px] bg-white border-b-2 border-[#999999] pt-[166px] pl-[190px]">
        <CropMark className="left-[153px] top-[115px] border-r border-b" />
        <CropMark className="left-[1065px] top-[115px] border-l border-b" />
        <CropMark className="left-[153px] top-[1622px] border-r border-t" />
        <CropMark className="left-[1065px] top-[1622px] border-l border-t" />
        <div className="absolute left-[138px] top-[521px] grid grid-cols-2 gap-x-[2px] gap-y-[2px]">
          {[0, 1, 2, 3, 4, 5].map((d) => <span key={d} className="w-[2px] h-[2px] bg-[#777777]" />)}
        </div>
        <QuickLinksShot />
        <div className="mt-[18px]"><SearchFieldsShot /></div>
        <div className="mt-[7px] text-[18.8px] leading-[24px] text-black">Then click search</div>
      </div>
      <div className="relative mt-[28px] h-[1682px] bg-white pt-[151px] pl-[190px]">
        <CropMark className="left-[153px] top-[115px] border-r border-b z-10" />
        <CropMark className="left-[1065px] top-[115px] border-l border-b z-10" />
        <CropMark className="left-[153px] top-[1622px] border-r border-t" />
        <CropMark className="left-[1065px] top-[1622px] border-l border-t" />
        <ResultsShot />
        <div className="mt-[16px]"><DragDropShot /></div>
      </div>
    </div>
  );
}
